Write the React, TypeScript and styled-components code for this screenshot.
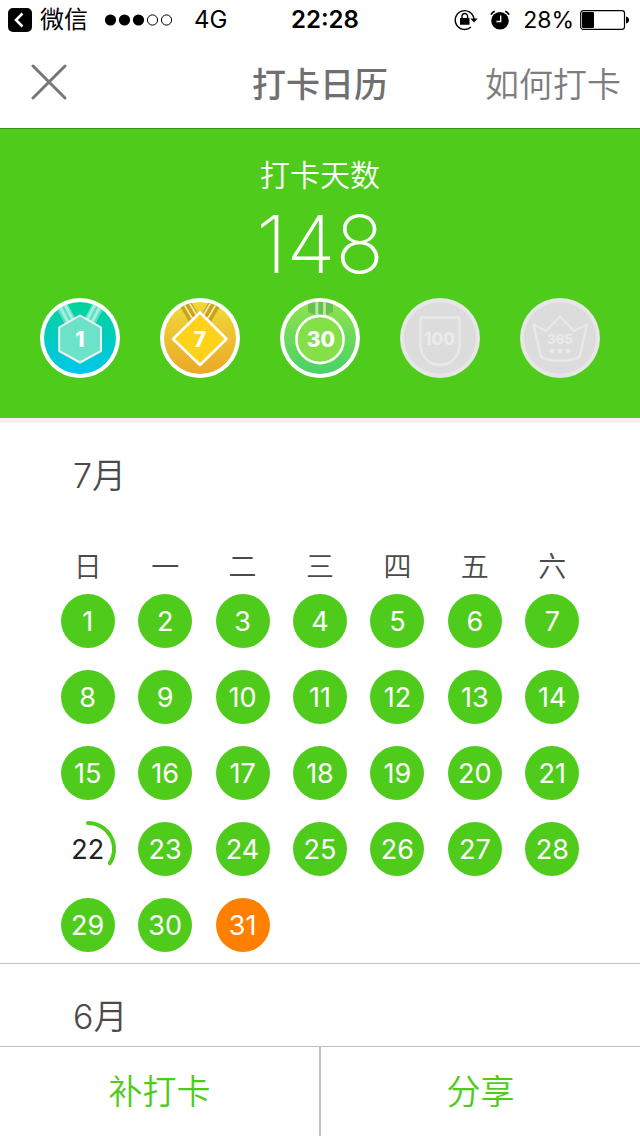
import React from "react";
import styled, { createGlobalStyle } from "styled-components";

const GREEN = "#4fcc1b";
const LINE = "#c0bfca";

const GlobalStyle = createGlobalStyle`
  *, *::before, *::after { box-sizing: border-box; }
  body {
    margin: 0;
    background: #fff;
    color: #4a4a4a;
    font-family: Inter, "Noto Sans CJK SC", sans-serif;
  }
  button { border: 0; background: none; padding: 0; font: inherit; cursor: pointer; }
`;

const Screen = styled.div`
  display: flex;
  flex-direction: column;
  height: 100vh;
`;

const StatusBar = styled.div`
  display: grid;
  grid-template-columns: 1fr auto 1fr;
  align-items: center;
  height: 40px;
  padding: 0 10px 0 8px;
  color: #000;
  font-size: 24px;
  line-height: 40px;
  white-space: nowrap;
`;

const StatusGroup = styled.div<{ $end?: boolean }>`
  display: flex;
  align-items: center;
  justify-content: ${(p) => (p.$end ? "flex-end" : "flex-start")};
`;

const BackApp = styled.button`
  display: flex;
  align-items: center;
  gap: 8px;
  color: #000;
`;

const Signal = styled.svg`
  margin: 0 21px 0 16px;
`;

const Clock = styled.time`
  margin-left: 12px;
  font-weight: 600;
`;

const StatusIcon = styled.svg<{ $gap: number }>`
  flex: none;
  margin-right: ${(p) => p.$gap}px;
`;

const Percent = styled.span`
  margin-right: 6px;
  font-size: 23px;
`;

const NavBar = styled.header`
  display: grid;
  grid-template-columns: 1fr auto 1fr;
  align-items: center;
  height: 89px;
  flex: none;
  padding: 0 19px;
  border-bottom: 1px solid #37921a;
  font-size: 34px;
`;

const CloseButton = styled.button`
  display: flex;
  justify-self: start;
  padding: 0 12px 4px;
`;

const Title = styled.h1`
  margin: 0;
  padding-top: 2px;
  color: #707070;
  font-size: 34px;
  font-weight: 500;
  line-height: 48px;
`;

const HelpLink = styled.a`
  justify-self: end;
  padding-top: 2px;
  color: #7d7d7d;
  font-weight: 350;
  line-height: 48px;
  text-decoration: none;
`;

const Hero = styled.section`
  flex: none;
  padding: 24px 40px 40px;
  border-bottom: 5px solid #f1f1f1;
  background: ${GREEN};
  background-clip: padding-box;
  color: #fff;
  text-align: center;
`;

const HeroLabel = styled.p`
  margin: 0;
  font-size: 30px;
  font-weight: 350;
  line-height: 44px;
`;

const HeroCount = styled.p`
  margin: 0 0 8px;
  font-size: 80px;
  font-weight: 250;
  line-height: 93px;
`;

const Badges = styled.ul`
  display: flex;
  justify-content: space-between;
  margin: 0;
  padding: 0;
  list-style: none;
`;

const BadgeItem = styled.li`
  display: flex;
`;

const BadgeNumber = styled.text`
  font-family: Inter, sans-serif;
  font-weight: 800;
  text-anchor: middle;
`;

const Months = styled.main`
  flex: 1;
  min-height: 0;
  overflow-y: auto;
  scrollbar-width: none;
`;

const Month = styled.section`
  & + & { border-top: 1px solid ${LINE}; }
`;

const MonthTitle = styled.h2`
  margin: 0;
  padding: 28px 73px 0;
  font-size: 34px;
  font-weight: 350;
  line-height: 50px;
`;

const Calendar = styled.table`
  width: calc(100% - 98px);
  margin: 50px 49px 0;
  border-collapse: collapse;
  table-layout: fixed;
  text-align: center;
`;

const Weekday = styled.th`
  height: 32px;
  padding: 0;
  font-size: 28px;
  font-weight: 350;
  line-height: 32px;
`;

const DayCell = styled.td`
  height: 76px;
  padding: 0;
`;

type DayKind = "done" | "missed" | "today";

const Day = styled.span<{ $kind: DayKind }>`
  position: relative;
  display: flex;
  align-items: center;
  justify-content: center;
  width: 54px;
  height: 54px;
  margin: 0 auto;
  border-radius: 50%;
  background: ${(p) =>
    p.$kind === "done" ? GREEN : p.$kind === "today" ? "#ff8000" : "transparent"};
  color: ${(p) => (p.$kind === "missed" ? "#222" : "#fff")};
  font-size: 27px;
`;

const DayArc = styled.svg`
  position: absolute;
  inset: 0;
  overflow: visible;
`;

const Actions = styled.footer`
  display: flex;
  flex: none;
  height: 90px;
  border-top: 1px solid ${LINE};
  background: #fff;
`;

const Action = styled.button`
  flex: 1;
  color: ${GREEN};
  font-size: 34px;
  font-weight: 350;
  line-height: 48px;
  & + & { border-left: 2px solid ${LINE}; }
`;

function Badge({ label, top, bottom, locked, children }: {
  label: string; top: string; bottom: string; locked?: boolean; children: React.ReactNode;
}) {
  const id = `badge-${label}`;
  return (
    <BadgeItem>
      <svg width="80" height="80" viewBox="0 0 80 80" role="img" aria-label={label}>
        <defs>
          <linearGradient id={id} x1="0" y1="0" x2="0" y2="1">
            <stop offset="0" stopColor={top} />
            <stop offset="1" stopColor={bottom} />
          </linearGradient>
          <clipPath id={`${id}-clip`}><circle cx="40" cy="40" r="36.2" /></clipPath>
        </defs>
        <circle cx="40" cy="40" r="40" fill={locked ? "#e7e7e7" : "#fff"} />
        <circle cx="40" cy="40" r="36" fill={`url(#${id})`} />
        <g clipPath={`url(#${id}-clip)`}>{children}</g>
      </svg>
    </BadgeItem>
  );
}

const star = (cx: number, cy: number) =>
  Array.from({ length: 10 }, (_, i) => {
    const r = i % 2 ? 1.8 : 3.4;
    const a = (Math.PI / 5) * i - Math.PI / 2;
    return `${(cx + r * Math.cos(a)).toFixed(2)},${(cy + r * Math.sin(a)).toFixed(2)}`;
  }).join(" ");

const WEEKDAYS = ["日", "一", "二", "三", "四", "五", "六"];
const WEEKS = Array.from({ length: 5 }, (_, w) =>
  Array.from({ length: 7 }, (_, d) => w * 7 + d + 1)
);
const kindOf = (day: number): DayKind =>
  day === 22 ? "missed" : day === 31 ? "today" : "done";

export default function App() {
  return (
    <Screen>
      <GlobalStyle />
      <StatusBar>
        <StatusGroup>
          <BackApp>
            <svg width="24" height="24" viewBox="0 0 24 24" aria-hidden="true">
              <rect width="24" height="24" rx="5" fill="#000" />
              <path d="M14.5 5.5 8 12l6.500 6.500" fill="none" stroke="#fff" strokeWidth="2.600" />
            </svg>
            微信
          </BackApp>
          <Signal width="69" height="12" viewBox="0 0 69 12" aria-hidden="true">
            {[0, 1, 2, 3, 4].map((i) => (
              <circle key={i} cx={6.5 + i * 14} cy="6" r={i < 3 ? 5.6 : 5.1}
                fill={i < 3 ? "#000" : "none"} stroke={i < 3 ? "none" : "#000"} />
            ))}
          </Signal>
          <span>4G</span>
        </StatusGroup>
        <Clock>22:28</Clock>
        <StatusGroup $end>
          <StatusIcon $gap={12} width="24" height="22" viewBox="0 0 24 22" aria-hidden="true">
            <path d="M20 10A9.400 9.400 0 1 0 17 18" fill="none" stroke="#000" strokeWidth="1.400" />
            <path d="M16.300 9.500h7.400l-3.700 4z" />
            <rect x="6" y="9" width="9.500" height="6.800" rx=".6" />
            <path d="M8 9.500V7.300a2.800 2.800 0 0 1 5.600 0v2.200" fill="none" stroke="#000" strokeWidth="1.400" />
          </StatusIcon>
          <StatusIcon $gap={13} width="20" height="20" viewBox="0 0 20 20" aria-hidden="true">
            <circle cx="10" cy="10.700" r="8.800" />
            <path d="M1 4.800A6 6 0 0 1 4.800 1.200M19 4.800A6 6 0 0 0 15.200 1.200" fill="none" stroke="#000" strokeWidth="1.700" />
            <path d="M10.700 5.500v6H6.500" fill="none" stroke="#fff" strokeWidth="1.300" />
          </StatusIcon>
          <Percent>28%</Percent>
          <svg width="50" height="20" viewBox="0 0 50 20" aria-hidden="true">
            <rect x=".7" y=".7" width="43.800" height="18.600" rx="2.500" fill="none" stroke="#000" strokeWidth="1.200" />
            <rect x="2" y="2" width="12" height="16" rx="1" />
            <path d="M46 6.500c4 .5 4 6.500 0 7z" />
          </svg>
        </StatusGroup>
      </StatusBar>

      <NavBar>
        <CloseButton aria-label="关闭">
          <svg width="36" height="36" viewBox="0 0 36 36" aria-hidden="true">
            <path d="M2 2l32 32M34 2 2 34" stroke="#777" strokeWidth="3" strokeLinecap="round" />
          </svg>
        </CloseButton>
        <Title>打卡日历</Title>
        <HelpLink href="#help">如何打卡</HelpLink>
      </NavBar>

      <Hero>
        <HeroLabel>打卡天数</HeroLabel>
        <HeroCount>148</HeroCount>
        <Badges>
          <Badge label="1" top="#04d397" bottom="#00c6ea">
            <g strokeWidth="3" stroke="#fff" fill="none">
              <path d="M20 4l11 21M60 4 49 25" strokeOpacity=".35" strokeWidth="12" />
              <path d="M18 5l11 21M23 3l11 21M62 5 51 26M57 3 46 24" strokeOpacity=".45" />
            </g>
            <path d="M40 17.500 61 29.300V53L40 64.500 19.200 53V29.300z" fill="#6ce3c8" stroke="#f0eeee" strokeWidth="2" strokeLinejoin="round" />
            <BadgeNumber x="40" y="49" fontSize="21" fill="#fff">1</BadgeNumber>
          </Badge>
          <Badge label="7" top="#f0d93b" bottom="#eaa826">
            <path d="M22 0l14 24M58 0 44 24" stroke="#c9a41a" strokeWidth="12" />
            <path d="M22 3l13 22M27 1l13 22M58 3 45 25M53 1 40 23" stroke="#f5e6a0" strokeWidth="1.800" />
            <path d="M40 14.500 66.500 41 40 67 13 41z" fill="#ffd21a" stroke="#fff" strokeWidth="2.600" strokeLinejoin="round" />
            <BadgeNumber x="40" y="49" fontSize="21" fill="#fff">7</BadgeNumber>
          </Badge>
          <Badge label="30" top="#91e24d" bottom="#47d268">
            <path d="M28 3h25v11l-7 3H35l-7-3z" fill="#68c04d" />
            <path d="M36.800 3v15M44.500 3v15" stroke="#b8e8a0" strokeWidth="3" />
            <circle cx="40" cy="41.500" r="23.600" fill="#84e048" stroke="#fff" strokeWidth="2.600" />
            <BadgeNumber x="41" y="49" fontSize="21" fill="#fff">30</BadgeNumber>
          </Badge>
          <Badge label="100" top="#dcdcdc" bottom="#dcdcdc" locked>
            <path d="M20.500 19.500h39V47a19.500 20 0 0 1-39 0z" fill="none" stroke="#e8e8e8" strokeWidth="2.600" />
            <BadgeNumber x="39.500" y="47" fontSize="17" fill="#ebebeb">100</BadgeNumber>
          </Badge>
          <Badge label="365" top="#dcdcdc" bottom="#dcdcdc" locked>
            <path d="M13.500 26.500 26 33 40 18.500 54 33l13-6.500L60 57q-1 3-3.500 3.500Q40 65 24 60.500 21.500 60 20.500 57z" fill="none" stroke="#e8e8e8" strokeWidth="2.400" strokeLinejoin="round" />
            <BadgeNumber x="40" y="45.500" fontSize="13" fill="#ebebeb">365</BadgeNumber>
            {[32, 40, 48].map((x) => <polygon key={x} points={star(x, 53)} fill="#ebebeb" />)}
          </Badge>
        </Badges>
      </Hero>

      <Months>
        <Month>
          <MonthTitle>7月</MonthTitle>
          <Calendar aria-label="7月">
            <thead>
              <tr>{WEEKDAYS.map((d) => <Weekday key={d} scope="col">{d}</Weekday>)}</tr>
            </thead>
            <tbody>
              {WEEKS.map((week) => (
                <tr key={week[0]}>
                  {week.map((day) => (
                    <DayCell key={day}>
                      {day <= 31 && (
                        <Day $kind={kindOf(day)}>
                          {day}
                          {kindOf(day) === "missed" && (
                            <DayArc width="54" height="54" viewBox="0 0 54 54" aria-hidden="true">
                              <path d="M27 1A26 26 0 0 1 48.800 41.200" fill="none" stroke={GREEN} strokeWidth="4" strokeLinecap="round" />
                            </DayArc>
                          )}
                        </Day>
                      )}
                    </DayCell>
                  ))}
                </tr>
              ))}
            </tbody>
          </Calendar>
        </Month>
        <Month>
          <MonthTitle>6月</MonthTitle>
        </Month>
      </Months>

      <Actions>
        <Action>补打卡</Action>
        <Action>分享</Action>
      </Actions>
    </Screen>
  );
}
